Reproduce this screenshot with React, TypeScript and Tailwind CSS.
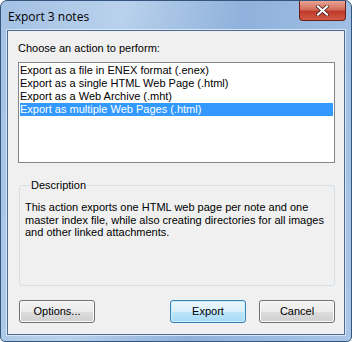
const font = { fontFamily: "'Liberation Sans', Arial, sans-serif" };

const items = [
  "Export as a file in ENEX format (.enex)",
  "Export as a single HTML Web Page (.html)",
  "Export as a Web Archive (.mht)",
  "Export as multiple Web Pages (.html)",
];

function Button({ label, primary }: { label: string; primary?: boolean }) {
  return (
    <button
      className={
        "h-[23px] w-[76px] rounded-[3px] border text-[11px] text-black " +
        (primary
          ? "border-[#3c7fb1] bg-[linear-gradient(#eaf6fd_0%,#d9f0fc_50%,#bee6fd_51%,#a7d9f5_100%)] shadow-[inset_0_0_0_1px_#c6f0ff]"
          : "border-[#707070] bg-[linear-gradient(#f2f2f2_0%,#ebebeb_50%,#dddddd_51%,#cfcfcf_100%)] shadow-[inset_0_0_0_1px_#fcfcfc]")
      }
    >
      {label}
    </button>
  );
}

export default function App() {
  return (
    <div
      className="flex h-[342px] w-[352px] flex-col overflow-hidden rounded-t-[7px] rounded-b-[5px] border border-[#34557d] bg-[linear-gradient(100deg,#a4c1e4_0%,#b9d1ec_30%,#8fb1db_60%,#a9c6e8_100%)]"
      style={font}
    >
      <div className="flex h-[29px] shrink-0 items-start justify-between pl-[7px]">
        <span className="mt-[7px] text-[12px] text-black" style={{ fontFamily: "'Open Sans', 'DejaVu Sans', sans-serif" }}>
          Export 3 notes
        </span>
        <div className="mr-[5px] flex h-[20px] w-[47px] items-center justify-center rounded-b-[4px] border border-t-0 border-[#6b1f18] bg-[linear-gradient(#e8a394_0%,#d26d5a_45%,#c0392a_55%,#d15a44_100%)]">
          <svg width="13" height="11" viewBox="0 0 13 11">
            <path d="M2 1.5 L11 9.5 M11 1.5 L2 9.5" stroke="#3b1410" strokeWidth="3.6" strokeLinecap="square" />
            <path d="M2 1.5 L11 9.5 M11 1.5 L2 9.5" stroke="#ffffff" strokeWidth="2.2" strokeLinecap="square" />
          </svg>
        </div>
      </div>
      <div className="mx-[6px] mb-[6px] flex flex-1 flex-col border border-[#4a6a91] bg-[#f0f0f0] pl-[10px] pr-[9px] pt-[11px] shadow-[0_0_0_1px_#d9e6f4]">
        <div className="text-[11px] leading-[13px] text-black">Choose an action to perform:</div>
        <div className="mt-[7px] h-[101px] border border-[#828790] bg-white px-[1px] py-[1px]">
          {items.map((t, i) => (
            <div
              key={t}
              className={
                "h-[13px] whitespace-nowrap text-[11px] leading-[13px] " +
                (i === 3 ? "bg-[#3399ff] text-white" : "text-black")
              }
            >
              {t}
            </div>
          ))}
        </div>
        <fieldset className="ml-[1px] mt-[16px] h-[107px] rounded-[3px] border border-[#d5dfe5] px-[5px]">
          <legend className="ml-[5px] px-[1px] text-[11px] leading-[13px] text-black">Description</legend>
          <p className="mt-[9px] text-[11px] leading-[12.5px] text-black">
            This action exports one HTML web page per note and one master index file, while also creating directories for all images and other linked attachments.
          </p>
        </fieldset>
        <div className="ml-[1px] mt-[14px] flex items-center">
          <Button label="Options..." />
          <div className="flex-1" />
          <Button label="Export" primary />
          <div className="w-[13px]" />
          <Button label="Cancel" />
        </div>
      </div>
    </div>
  );
}
